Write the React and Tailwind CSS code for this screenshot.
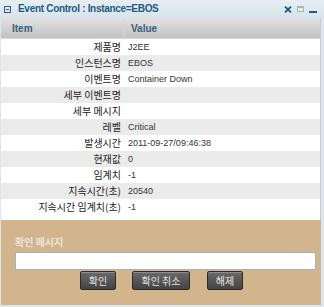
import React from "react";

const rows = [
  ["제품명", "J2EE"],
  ["인스턴스명", "EBOS"],
  ["이벤트명", "Container Down"],
  ["세부 이벤트명", ""],
  ["세부 메시지", ""],
  ["레벨", "Critical"],
  ["발생시간", "2011-09-27/09:46:38"],
  ["현재값", "0"],
  ["임계치", "-1"],
  ["지속시간(초)", "20540"],
  ["지속시간 임계치(초)", "-1"],
];

const kr = { fontFamily: '"Noto Sans CJK KR", "Noto Sans", sans-serif' };
const lat = { fontFamily: '"Liberation Sans", Arial, sans-serif' };

function Btn({ children }) {
  return (
    <div
      className="h-[19px] flex items-center justify-center border border-[#2a2a2a] rounded-[2px] bg-gradient-to-b from-[#6a6a6a] to-[#444444] text-[#e4e4e4] text-[10px] shadow-[inset_0_1px_0_rgba(255,255,255,0.25)]"
      style={kr}
    >
      {children}
    </div>
  );
}

export default function App() {
  return (
    <div className="w-[324px] h-[307px] bg-[#dce6ec] flex flex-col overflow-hidden">
      {/* title bar */}
      <div className="h-[18px] flex items-center bg-gradient-to-b from-[#e6eef3] to-[#d9e4eb]">
        <div className="ml-[4px] w-[7px] h-[7px] border border-[#2a5f85] flex items-center justify-center">
          <div className="w-[3px] h-[1px] bg-[#2a5f85]" />
        </div>
        <div
          className="ml-[7px] text-[10px] font-bold text-[#1f5a80] tracking-[-0.3px] leading-none"
          style={lat}
        >
          Event Control : Instance=EBOS
        </div>
        <div className="ml-auto mr-[7px] flex items-center gap-[5px]">
          <svg width="8" height="7" viewBox="0 0 8 7">
            <path d="M1 0.5 L7 6.5 M7 0.5 L1 6.5" stroke="#1e5f8a" strokeWidth="1.8" />
          </svg>
          <div className="w-[7px] h-[6px] border border-[#a9b4bb] bg-[#e3e9ed] border-t-2" />
          <div className="w-[8px] h-[2px] bg-[#1e5f8a] mt-[6px]" />
        </div>
      </div>

      {/* table */}
      <div className="flex-1 flex flex-col pl-[1px] pr-[3px]">
        <div className="h-[202px] bg-white border-r border-[#c8c8c8] flex flex-col">
          <div className="h-[21px] flex bg-gradient-to-b from-[#e2e2e2] to-[#c2c2c2] border-b border-[#d8d8d8]">
            <div
              className="w-[123px] border-r border-[#d6d6d6] flex items-center pl-[11px] text-[10px] font-bold text-[#3b6079]"
              style={lat}
            >
              Item
            </div>
            <div
              className="flex-1 flex items-center pl-[7px] text-[10px] font-bold text-[#3b6079]"
              style={lat}
            >
              Value
            </div>
          </div>
          {rows.map(([k, v], i) => (
            <div
              key={k}
              className={
                "h-[16px] flex items-center " +
                (i % 2 === 1 ? "bg-[#ebebeb]" : "bg-white")
              }
            >
              <div
                className="w-[123px] text-right pr-[3px] text-[10px] text-[#222] leading-none"
                style={kr}
              >
                {k}
              </div>
              <div
                className="pl-[4px] text-[9px] text-[#333] leading-none"
                style={lat}
              >
                {v}
              </div>
            </div>
          ))}
        </div>

        {/* bottom panel */}
        <div className="h-[85px] bg-[#d3b58d] flex flex-col pl-[14px] pr-[5px]">
          <div
            className="mt-[17px] text-[10px] font-bold text-[#ebe5dc] leading-none"
            style={kr}
          >
            확인 메시지
          </div>
          <div className="mt-[5px] h-[18px] bg-white border border-[#9fb6c8]" />
          <div className="mt-[1px] flex">
            <div className="ml-[65px] w-[36px]">
              <Btn>확인</Btn>
            </div>
            <div className="ml-[16px] w-[58px]">
              <Btn>확인 취소</Btn>
            </div>
            <div className="ml-[17px] w-[36px]">
              <Btn>해제</Btn>
            </div>
          </div>
        </div>
      </div>
    </div>
  );
}
